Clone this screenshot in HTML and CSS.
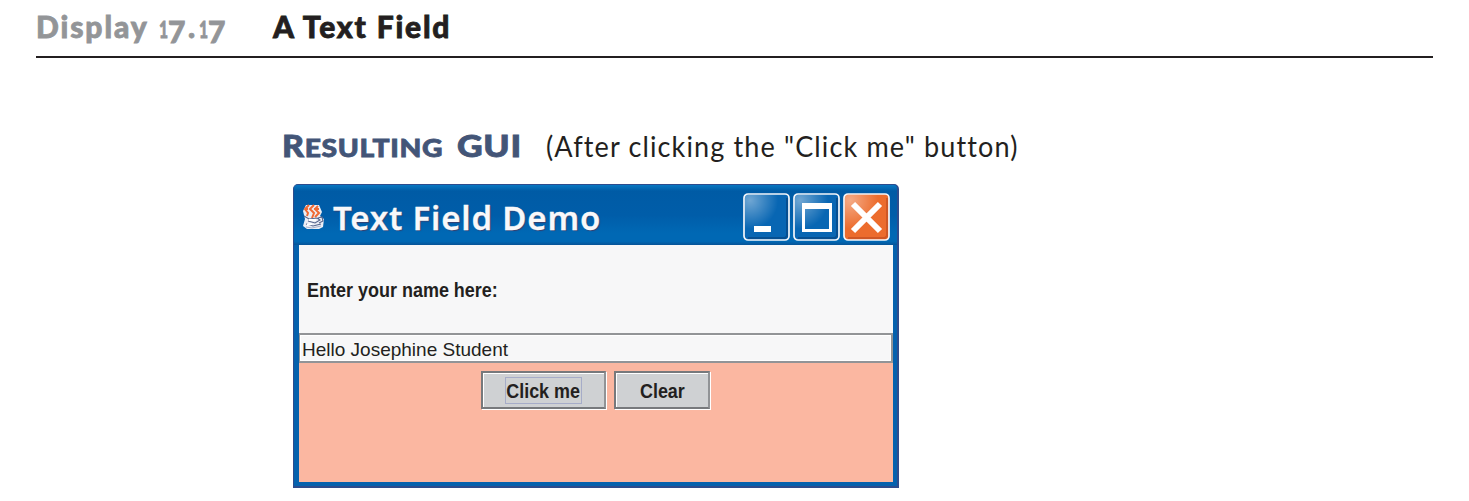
FILE: index.html
```html
<!DOCTYPE html>
<html lang="en">
<head>
<meta charset="utf-8">
<title>A Text Field</title>
<link rel="stylesheet" href="styles.css">
</head>
<body>
<header class="display-head">
  <div class="display-number"><span class="display-word">Display</span><span class="one">1</span><span class="seven">7</span><span class="dot">.</span><span class="one">1</span><span class="seven">7</span></div>
  <h1 class="display-title">A Text Field</h1>
</header>
<main class="figure">
  <div class="caption">
    <h2 class="caption-label"><span class="resulting">R<small>ESULTING</small></span><span class="gui">GUI</span></h2>
    <span class="caption-note">(After clicking the "Click me" button)</span>
  </div>
  <section class="window">
    <div class="titlebar">
      <svg class="java-icon" viewBox="0 0 24 26">
        <path d="M4 1h13l3 7-2 4 4 3-1 8-4 2H5l-4-3 2-7-2-8z" fill="#eceef5"/>
        <path d="M7 1 3 5l3 4-1 3M12 1 8 5l4 4-2 5M16 2l-3 3 4 4-4 4M3 5h3M12 5h5" fill="none" stroke="#ef6a35" stroke-width="2"/>
        <path d="M2 12l5 3 8-1 3 2-5 3-7-2M16 14l4-1 1 4-4 2M4 20l7 2 8-2" fill="none" stroke="#56658d" stroke-width="1.1"/>
        <path d="M4 23l6 1 9-2" fill="none" stroke="#a9b3cc" stroke-width="1"/>
        <path d="M7 16h7M5 21l5-1" stroke="#fff" stroke-width="2"/>
      </svg>
      <span class="window-title">Text Field Demo</span>
      <div class="controls">
        <svg class="control" viewBox="0 0 47 48"><defs><radialGradient id="sheen" cx="0.12" cy="0.12" r="0.65"><stop offset="0" stop-color="#fff" stop-opacity=".42"/><stop offset="1" stop-color="#fff" stop-opacity="0"/></radialGradient></defs><rect x="1" y="1" width="45" height="46" rx="4" fill="#0866b3" stroke="#f4f6fa" stroke-width="1.7"/><rect x="2" y="2" width="43" height="44" rx="3" fill="url(#sheen)"/><path d="M44 5v38l-2 2H5" fill="none" stroke="#064f91" stroke-width="2"/><path d="M11 33h17v6H11z" fill="#fff"/></svg>
        <svg class="control" viewBox="0 0 47 48"><rect x="1" y="1" width="45" height="46" rx="4" fill="#0866b3" stroke="#f4f6fa" stroke-width="1.7"/><rect x="2" y="2" width="43" height="44" rx="3" fill="url(#sheen)"/><path d="M44 5v38l-2 2H5" fill="none" stroke="#064f91" stroke-width="2"/><path fill-rule="evenodd" d="M9 10h30v29H9zM12 16v20h24V16z" fill="#fff"/></svg>
        <svg class="control" viewBox="0 0 47 48"><rect x="1" y="1" width="45" height="46" rx="4" fill="#ec6c2d" stroke="#f4f6fa" stroke-width="1.7"/><rect x="2" y="2" width="43" height="44" rx="3" fill="url(#sheen)"/><path d="M44 5v38l-2 2H5" fill="none" stroke="#cf5725" stroke-width="2"/><path d="m10 11 27 27m0-27L10 38" stroke="#fff" stroke-width="6"/></svg>
      </div>
    </div>
    <div class="content">
      <div class="label-panel"><label class="name-label">Enter your name here:</label></div>
      <div class="text-field"><span class="field-text">Hello Josephine Student</span></div>
      <div class="button-panel">
        <div class="button button-wide"><span class="focus"><span class="button-text">Click me</span></span></div>
        <div class="button"><span class="button-text">Clear</span></div>
      </div>
    </div>
  </section>
</main>
</body>
</html>
```
FILE: styles.css
```css
* { box-sizing: border-box; }
body { margin: 0; background: #fff; height: 501px; overflow: hidden; color: #231f20; white-space: nowrap; }
h1, h2 { margin: 0; }

.display-head { margin: 0 36px; height: 58px; border-bottom: 2px solid #231f20; display: flex; padding-top: 7px; font: 900 30px/38px Lato, sans-serif; -webkit-text-stroke: 0.8px currentColor; }
.display-number { width: 237px; color: #939598; display: flex; }
.display-word { width: 123px; letter-spacing: 1.9px; }
.display-title { font: inherit; letter-spacing: 1.8px; }
.one { width: 9px; font-size: 23px; line-height: 17px; padding-top: 14px; transform: scaleX(0.68); transform-origin: left; }
.seven { width: 18px; line-height: 24px; padding-top: 12px; }
.dot { width: 13px; padding-left: 2px; }

.figure { margin-left: 282px; }
.caption { height: 126px; padding-top: 68px; display: flex; line-height: 40px; }
.caption-label { width: 264px; display: flex; color: #435577; font: 900 30px/38px Lato, sans-serif; letter-spacing: 0.6px; -webkit-text-stroke: 0.8px currentColor; }
.caption-label small { font-size: 25px; }
.resulting, .gui { transform: scaleX(1.13); transform-origin: left; }
.resulting { width: 175px; }
.gui { transform: scaleX(1.18); }
.caption-note { font: 29px/40px Lato, sans-serif; letter-spacing: 1.2px; transform: scaleX(0.933); transform-origin: left; }

.window { margin-left: 11px; width: 606px; height: 304px; padding: 0 4px 4px 5px; background: #0561ad; border: solid #2d4c8d; border-width: 1px 2px 2px 1px; border-radius: 5px 5px 0 0; }
.titlebar { margin: 0 -4px 0 -5px; height: 60px; padding: 8px 7px 0 8px; display: flex; background: linear-gradient(#0878c2 0, #005ba5 6px, #005da9 50%, #0068b4 80%, #0068b4 94%, #075397); border-radius: 4px 4px 0 0; }
.java-icon { width: 24px; height: 26px; margin-top: 11px; }
.window-title { margin-left: 7px; color: #f8f8fa; font: 600 33px/50px "Noto Sans", sans-serif; letter-spacing: 0.8px; text-shadow: 1px 1px 1px #36406f; -webkit-text-stroke: 0.3px currentColor; }
.controls { margin-left: auto; display: flex; gap: 3px; }
.control { width: 47px; height: 48px; }

.content { height: 237px; background: #fbb7a1; }
.label-panel { height: 88px; background: #f7f7f8; padding: 30px 0 0 8px; }
.name-label { font: bold 19.5px/30px "Liberation Sans", sans-serif; display: block; transform: scaleX(0.922); transform-origin: left; }
.text-field { height: 30px; background: #f7f7f8; border: 2px solid #929497; border-width: 2px 2px 2px 1px; box-shadow: inset 1px 1px #fff, inset -1px -1px #fff; padding-left: 2px; font: 19px/29px "Liberation Sans", sans-serif; }
.button-panel { padding: 8px 1px 0 0; display: flex; justify-content: center; gap: 8px; }
.button { width: 96px; height: 38px; background: #cfd1d3; border: 2px solid #77797c; border-right-color: #919396; box-shadow: inset 1px 1px #fff, 1px 1px #fff; display: flex; align-items: center; justify-content: center; font: bold 19.5px/28px "Liberation Sans", sans-serif; }
.button-wide { width: 125px; }
.button-text { transform: scaleX(0.92); position: relative; top: 1px; }
.focus { border: 1px solid #a6acc8; width: 77px; height: 27px; line-height: 25px; display: flex; justify-content: center; }
```
